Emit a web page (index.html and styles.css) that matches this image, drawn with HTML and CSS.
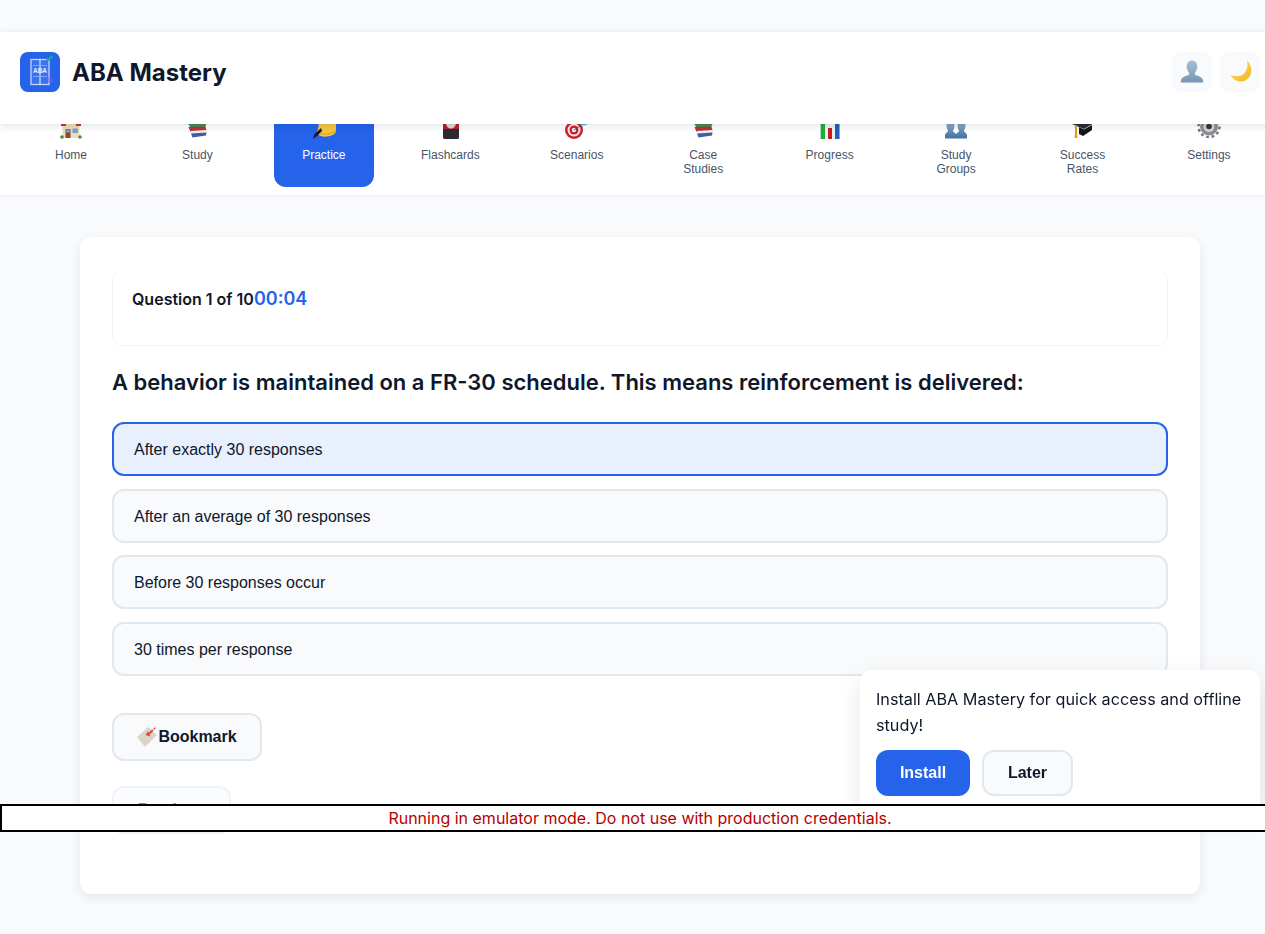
FILE: index.html
```html
<!DOCTYPE html>
<html lang="en">
<head>
    <meta charset="UTF-8">
    <meta name="viewport" content="width=device-width, initial-scale=1.0">
    <title>ABA Mastery</title>
    <link rel="stylesheet" href="styles.css">
</head>
<body>
    <header class="app-header">
        <div class="brand">
            <div class="logo">
                <svg width="40" height="40" viewBox="0 0 40 40">
                    <rect x="11" y="7.5" width="18" height="25" fill="#fff" fill-opacity="0.1" stroke="#c4d5fb" stroke-width="1.3"/>
                    <path d="M20 7.5V32.5" stroke="#d5e1fd" stroke-width="1.2"/>
                    <path d="M13 13.5H27M13 24.5H27" stroke="#8fadf6" stroke-width="0.8"/>
                    <text x="20" y="21" class="logo-text">ABA</text>
                    <circle cx="30.5" cy="28" r="3" fill="#7c5ce6" fill-opacity="0.45"/>
                    <path d="M26.5 6.5L28.2 8.2L32.5 4" fill="none" stroke="#10b981" stroke-width="1.8"/>
                </svg>
            </div>
            <h1>ABA Mastery</h1>
        </div>
        <div class="header-actions">
            <button class="icon-btn">
                <svg width="24" height="24" viewBox="0 0 24 24">
                    <defs>
                        <linearGradient id="userFill" x1="0" y1="0" x2="0" y2="1">
                            <stop offset="0" stop-color="#a6c0d6"/>
                            <stop offset="1" stop-color="#7895b4"/>
                        </linearGradient>
                    </defs>
                    <path fill="url(#userFill)" d="M12 .5c3.200 0 5.300 2.600 5.300 6 0 2.500-1 4.800-2.400 6.200v1.800c1.500 1.300 7 1.800 8 5.200.3 1 .3 2.300.3 2.800H.8c0-.5 0-1.800.3-2.800 1-3.400 6.500-3.900 8-5.200v-1.800C7.700 11.300 6.700 9 6.700 6.500c0-3.400 2.100-6 5.300-6z"/>
                </svg>
            </button>
            <button class="icon-btn">
                <svg width="24" height="24" viewBox="0 0 24 24">
                    <defs>
                        <linearGradient id="moonFill" x1="0" y1="0" x2="1" y2="1">
                            <stop offset="0" stop-color="#ffe047"/>
                            <stop offset="1" stop-color="#f4b42a"/>
                        </linearGradient>
                    </defs>
                    <path fill="url(#moonFill)" d="M19 .7C25 6 25 16 18 20 12 23.500 5.500 20.500 2.700 15 8 17.500 14 16.500 17 12.500 19.500 9 20 4.500 19 .7z"/>
                </svg>
            </button>
        </div>
    </header>

    <nav class="main-nav">
        <a class="nav-item">
            <svg class="nav-icon" viewBox="0 0 24 24">
                <rect x="3.500" y="8" width="17" height="15" fill="#eedcb8"/>
                <path d="M2 8H7V11H2ZM17 8H22V11H17Z" fill="#c0392b"/>
                <rect x="6.500" y="14" width="5" height="9" fill="#8a4b2a"/>
                <rect x="7.200" y="14.500" width="3.600" height="3" fill="#6aa6d8"/>
                <rect x="13.500" y="13.500" width="5.500" height="4.500" fill="#6aa6d8"/>
                <circle cx="3" cy="22" r="1.800" fill="#3f8f3a"/>
                <circle cx="21" cy="22" r="1.800" fill="#3f8f3a"/>
            </svg>
            <span>Home</span>
        </a>
        <a class="nav-item">
            <svg class="nav-icon" viewBox="0 0 24 24">
                <path d="M2.500 8H22L20 12L6 13Z" fill="#3f8f4f"/>
                <path d="M3.500 12L20.500 11.500L21.500 15.500L5.500 17Z" fill="#b8323a"/>
                <path d="M5.500 16L21.500 15V18L6.500 19.500Z" fill="#f2efe8"/>
                <path d="M6 18.500L21.500 17.500L21 20.500L7.500 22.500Z" fill="#3d5da8"/>
            </svg>
            <span>Study</span>
        </a>
        <a class="nav-item active">
            <svg class="nav-icon" viewBox="0 0 24 24">
                <path d="M7 8H24V15C24 19 20 21 15 21.500C11 22 8 21 5 19Z" fill="#f6c53f"/>
                <path d="M8 18C12 20 18 19.500 23 16" fill="none" stroke="#d99a1f" stroke-width="1"/>
                <path d="M1 24L2.500 19.500L9 13L10 16L5 21Z" fill="#14171f"/>
            </svg>
            <span>Practice</span>
        </a>
        <a class="nav-item">
            <svg class="nav-icon" viewBox="0 0 24 24">
                <rect x="5" y="2" width="16" height="22" rx="2" fill="#b5202a"/>
                <path d="M5 14H21V22A2 2 0 0 1 19 24H7A2 2 0 0 1 5 22Z" fill="#2b2b30"/>
                <ellipse cx="13" cy="8" rx="5" ry="5.500" fill="#e3d6c6"/>
            </svg>
            <span>Flashcards</span>
        </a>
        <a class="nav-item">
            <svg class="nav-icon" viewBox="0 0 24 24">
                <circle cx="9" cy="15" r="9" fill="#cf1f2b"/>
                <circle cx="9" cy="15" r="6.500" fill="#f6eeee"/>
                <circle cx="9" cy="15" r="4.500" fill="#cf1f2b"/>
                <circle cx="9" cy="15" r="2.200" fill="#f6eeee"/>
                <path d="M9 15L17 9.500" stroke="#4a5560" stroke-width="1"/>
                <path d="M15 10L19 7.500L24 8.500L19.500 10.500Z" fill="#35c3d6"/>
            </svg>
            <span>Scenarios</span>
        </a>
        <a class="nav-item">
            <svg class="nav-icon" viewBox="0 0 24 24">
                <path d="M2.500 8H22L20 12L6 13Z" fill="#3f8f4f"/>
                <path d="M3.500 12L20.500 11.500L21.500 15.500L5.500 17Z" fill="#b8323a"/>
                <path d="M5.500 16L21.500 15V18L6.500 19.500Z" fill="#f2efe8"/>
                <path d="M6 18.500L21.500 17.500L21 20.500L7.500 22.500Z" fill="#3d5da8"/>
            </svg>
            <span>Case<br>Studies</span>
        </a>
        <a class="nav-item">
            <svg class="nav-icon" viewBox="0 0 24 24">
                <rect x="2" y="2" width="20" height="22" fill="#eef1f4"/>
                <rect x="2.700" y="8" width="4.300" height="16" fill="#1fae3c"/>
                <rect x="10" y="13" width="4" height="11" fill="#c41e24"/>
                <rect x="17" y="6" width="4.500" height="18" fill="#1f5fbf"/>
            </svg>
            <span>Progress</span>
        </a>
        <a class="nav-item">
            <svg class="nav-icon" viewBox="0 0 24 24">
                <defs>
                    <linearGradient id="groupFill" x1="0" y1="0" x2="0" y2="1">
                        <stop offset="0.3" stop-color="#7fa0c2"/>
                        <stop offset="1" stop-color="#41709f"/>
                    </linearGradient>
                </defs>
                <path fill="url(#groupFill)" d="M6.500 6C9 6 10.500 8 10.500 10.500C10.500 13 9.500 15 8.800 16C9.500 17 11 18 12 19C13 18 14.500 17 15.200 16C14.500 15 13.500 13 13.500 10.500C13.500 8 15 6 17.500 6C20 6 21.500 8 21.500 10.500C21.500 13 20.500 15 19.800 16C20.500 17.500 23 18 23 20V23.500H1V20C1 18 3.500 17.500 4.200 16C3.500 15 2.500 13 2.500 10.500C2.500 8 4 6 6.500 6Z"/>
            </svg>
            <span>Study<br>Groups</span>
        </a>
        <a class="nav-item">
            <svg class="nav-icon" viewBox="0 0 24 24">
                <path d="M1 9L12 3L23 8L13 14Z" fill="#2c2c30"/>
                <path d="M8 12L13 14.500L21 10V15L12 21L8 19Z" fill="#17171a"/>
                <path d="M4 10H6V19L6.500 23H3.500L4 19Z" fill="#e79a1e"/>
            </svg>
            <span>Success<br>Rates</span>
        </a>
        <a class="nav-item">
            <svg class="nav-icon" viewBox="0 0 24 24">
                <circle cx="12" cy="11.500" r="10.500" fill="none" stroke="#77777c" stroke-width="2.500" stroke-dasharray="2.800 2.700"/>
                <circle cx="12" cy="11.500" r="9" fill="#8b8b90"/>
                <circle cx="12" cy="11.500" r="5.500" fill="#d3d3d6"/>
                <circle cx="12" cy="11.500" r="2.800" fill="#35353a"/>
            </svg>
            <span>Settings</span>
        </a>
    </nav>

    <main class="content">
        <section class="card">
            <div class="quiz-header">
                <span class="quiz-count">Question 1 of 10</span><span class="quiz-timer">00:04</span>
            </div>
            <h2 class="question">A behavior is maintained on a FR-30 schedule. This means reinforcement is delivered:</h2>
            <div class="options">
                <div class="option selected">After exactly 30 responses</div>
                <div class="option">After an average of 30 responses</div>
                <div class="option">Before 30 responses occur</div>
                <div class="option">30 times per response</div>
            </div>
            <button class="btn bookmark">
                <svg width="20" height="22" viewBox="0 0 20 22">
                    <path d="M0 11L11 1L20 9L8 21Z" fill="#ddd5c8"/>
                    <path d="M11 8.500L16 4" stroke="#e8443f" stroke-width="2"/>
                    <path d="M11 5.500L13.500 10.500L8.500 9Z" fill="#e8443f"/>
                    <path d="M16 2L18.500 1.500L18 4Z" fill="#e8443f"/>
                </svg>
                Bookmark
            </button>
            <button class="btn previous">Previous</button>
        </section>
    </main>

    <aside class="install-prompt">
        <p>Install ABA Mastery for quick access and offline study!</p>
        <div class="install-actions">
            <button class="btn primary">Install</button>
            <button class="btn later">Later</button>
        </div>
    </aside>

    <div class="emulator-warning">Running in emulator mode. Do not use with production credentials.</div>
</body>
</html>
```

FILE: styles.css
```css
* {
    box-sizing: border-box;
}
html {
    height: 934px;
    overflow: hidden;
}
body {
    width: 1280px;
    height: 934px;
    margin: 0;
    padding-top: 32px;
    background-color: #f8fafc;
    color: #0f172a;
    font-family: Inter, sans-serif;
}
button {
    font-family: "Liberation Sans", Arial, sans-serif;
}
.app-header {
    position: relative;
    z-index: 10;
    display: flex;
    justify-content: space-between;
    align-items: center;
    height: 92px;
    padding: 0 20px 12px;
    background-color: #fff;
    box-shadow: 0 2px 8px rgba(15, 23, 42, 0.12);
}
.brand {
    display: flex;
    align-items: center;
    gap: 12px;
}
.logo {
    width: 40px;
    height: 40px;
    border-radius: 8px;
    background-color: #2563eb;
}
.logo svg {
    display: block;
}
.logo-text {
    fill: #e6edfd;
    font-family: "Liberation Sans", Arial, sans-serif;
    font-size: 6.5px;
    font-weight: 700;
    text-anchor: middle;
}
h1 {
    margin: 0;
    font-size: 24px;
    font-weight: 700;
}
.header-actions {
    display: flex;
    gap: 8px;
}
.icon-btn {
    display: flex;
    justify-content: center;
    align-items: center;
    width: 40px;
    height: 40px;
    padding: 0;
    border: none;
    border-radius: 10px;
    background-color: #f8fafc;
}
.main-nav {
    display: flex;
    justify-content: space-between;
    height: 95px;
    margin-top: -22px;
    padding: 0 21px 8px;
    background-color: #fff;
    border-bottom: 2px solid #f1f5f9;
}
.nav-item {
    display: flex;
    flex-direction: column;
    align-items: center;
    width: 100px;
    height: 85px;
    padding-top: 13px;
    border-radius: 12px;
    color: #475569;
    font-family: "Liberation Sans", Arial, sans-serif;
    font-size: 12px;
    line-height: 14px;
    text-align: center;
}
.nav-item.active {
    background-color: #2563eb;
    color: #fff;
}
.nav-icon {
    flex: none;
    width: 24px;
    height: 24px;
    margin-bottom: 9px;
}
.content {
    padding: 40px 80px;
}
.card {
    height: 657px;
    padding: 33px 32px;
    border-radius: 12px;
    background-color: #fff;
    box-shadow: 0 4px 12px rgba(15, 23, 42, 0.08);
}
.quiz-header {
    height: 76px;
    padding: 15px 19px;
    border: 1px solid #f1f5f9;
    border-top-color: transparent;
    border-radius: 12px;
    line-height: 26px;
}
.quiz-count {
    font-size: 16px;
    font-weight: 600;
}
.quiz-timer {
    color: #2563eb;
    font-size: 18px;
    font-weight: 600;
}
.question {
    margin: 22px 0 26px;
    font-size: 22px;
    font-weight: 600;
    line-height: 28px;
}
.options {
    display: flex;
    flex-direction: column;
    gap: 12.7px;
}
.option {
    height: 54px;
    padding: 0 20px;
    border: 2px solid #e2e8f0;
    border-radius: 12px;
    background-color: #f8fafc;
    font-family: "Liberation Sans", Arial, sans-serif;
    font-size: 16px;
    line-height: 51px;
}
.option.selected {
    border-color: #2563eb;
    background-color: #e8effd;
}
.btn {
    border: 2px solid #e2e8f0;
    border-radius: 12px;
    background-color: #f8fafc;
    color: #0f172a;
    font-size: 16px;
    font-weight: 700;
}
.bookmark {
    display: flex;
    justify-content: center;
    align-items: center;
    gap: 1px;
    width: 150px;
    height: 48px;
    margin-top: 37px;
}
.previous {
    display: block;
    width: 119px;
    height: 48px;
    margin-top: 25px;
    opacity: 0.5;
}
.install-prompt {
    position: fixed;
    top: 670px;
    left: 860px;
    width: 400px;
    height: 142px;
    padding: 16px;
    border-radius: 12px;
    background-color: #fff;
    box-shadow: 0 8px 24px rgba(15, 23, 42, 0.1);
}
.install-prompt p {
    margin: 0 0 12px;
    font-size: 16.2px;
    line-height: 26px;
}
.install-actions {
    display: flex;
    gap: 12px;
}
.install-actions .btn {
    height: 46px;
}
.primary {
    width: 94px;
    border: none;
    background-color: #2563eb;
    color: #fff;
}
.later {
    width: 91px;
}
.emulator-warning {
    position: fixed;
    top: 804px;
    left: 0;
    width: 1280px;
    height: 28px;
    border: 2px solid #000;
    background-color: #fff;
    color: #b50000;
    font-size: 16px;
    line-height: 24px;
    text-align: center;
}
```
